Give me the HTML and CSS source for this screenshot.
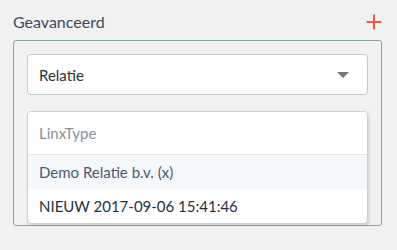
FILE: index.html
```html
<!DOCTYPE html>
<html lang="nl">
<head>
  <meta charset="UTF-8">
  <title>Geavanceerd</title>
  <link rel="stylesheet" href="styles.css">
</head>
<body>
  <div class="panel">
    <div class="panel-head">
      <h2>Geavanceerd</h2>
      <button class="add" type="button" aria-label="Toevoegen">
        <svg width="16" height="16" viewBox="0 0 16 16">
          <path d="M8 0.5V15.5M0.5 8H15.5" stroke="#ec5a4b" stroke-width="2" fill="none"/>
        </svg>
      </button>
    </div>
    <div class="box">
      <div class="select">
        <span>Relatie</span>
        <span class="caret"></span>
      </div>
      <div class="dropdown">
        <input type="text" class="search" placeholder="LinxType">
        <ul>
          <li class="active">Demo Relatie b.v. (x)</li>
          <li class="new">NIEUW 2017-09-06 15:41:46</li>
        </ul>
      </div>
    </div>
  </div>
</body>
</html>
```

FILE: styles.css
```css
body {
  margin: 0;
  background-color: #f1f1f1;
  font-family: Lato, "Noto Sans", sans-serif;
}

.panel {
  padding: 9px 15px 0 13px;
}

.panel-head {
  display: flex;
  justify-content: space-between;
  align-items: center;
  height: 24px;
}

.panel-head h2 {
  margin: 0;
  font-size: 16px;
  font-weight: normal;
  color: #3e4a5c;
}

.add {
  border: none;
  background: none;
  padding: 0;
  margin-top: 2px;
  width: 16px;
  height: 16px;
}

.box {
  margin-top: 7px;
  border: 1px solid #8ea3a6;
  border-radius: 3px;
  padding: 13px 13px 1px 13px;
  width: 341px;
}

.select {
  display: flex;
  justify-content: space-between;
  align-items: center;
  height: 39px;
  padding: 0 18px 0 11px;
  border: 1px solid #c8c8c8;
  border-radius: 4px;
  background-color: #fff;
  font-size: 15px;
  color: #27313d;
}

.caret {
  width: 0;
  height: 0;
  border-left: 6px solid transparent;
  border-right: 6px solid transparent;
  border-top: 6px solid #777;
}

.dropdown {
  margin-top: 16px;
  border: 1px solid #cfcfcf;
  border-radius: 4px;
  background-color: #fff;
  box-shadow: 1px 2px 3px rgba(0, 0, 0, 0.12);
  overflow: hidden;
}

.search {
  display: block;
  box-sizing: border-box;
  width: 100%;
  height: 43px;
  border: none;
  border-bottom: 1px solid #e4e6e8;
  padding: 0 11px;
  font-family: inherit;
  font-size: 15px;
  outline: none;
}

.search::placeholder {
  color: #8b8f99;
}

.dropdown ul {
  list-style: none;
  margin: 0;
  padding: 0;
}

.dropdown li {
  height: 34px;
  line-height: 34px;
  padding: 0 11px;
  font-size: 15px;
  color: #27313d;
}

.dropdown li.active {
  background-color: #f5f8fb;
  color: #4a5870;
}
```
